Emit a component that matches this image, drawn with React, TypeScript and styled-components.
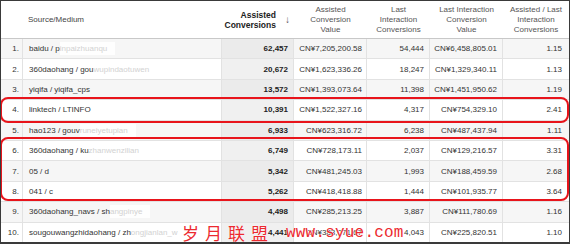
import React from "react";
import styled, { createGlobalStyle } from "styled-components";

const Global = createGlobalStyle`
  html, body { margin: 0; padding: 0; background: #fff; }
  body { font-family: "Liberation Sans", Arial, sans-serif; }
`;

const COLS = "22px 199px 72px 73px 63px 73px 1fr";

const Frame = styled.div`
  position: relative;
  width: 570px;
  height: 244px;
  box-sizing: border-box;
  border: 1px solid #3a3a3a;
  border-bottom-width: 2px;
  overflow: hidden;
  background: #fff;
  font-size: 8px;
  color: #333;
`;

const HeaderRow = styled.div`
  display: grid;
  grid-template-columns: ${COLS};
  height: 37px;
  border-bottom: 1px solid #c8c8c8;
  background: #fff;
`;

const HeadCell = styled.div<{ $align?: "left" | "center" | "right"; $bold?: boolean }>`
  display: flex;
  align-items: center;
  justify-content: ${(p) =>
    p.$align === "left" ? "flex-start" : p.$align === "right" ? "flex-end" : "center"};
  text-align: ${(p) => p.$align || "center"};
  line-height: 10px;
  color: ${(p) => (p.$bold ? "#222" : "#555")};
  font-weight: ${(p) => (p.$bold ? 700 : 400)};
  font-size: ${(p) => (p.$bold ? "8.5px" : "8px")};
  padding: 0 3px;
  box-sizing: border-box;
`;

const SourceHead = styled(HeadCell)`
  grid-column: 1 / 3;
  padding-left: 27px;
  color: #444;
`;

const SortArrow = styled.span`
  font-weight: 400;
  color: #555;
  font-size: 10px;
  margin-left: 9px;
  margin-right: 1px;
`;

const Row = styled.div<{ $odd: boolean }>`
  display: grid;
  grid-template-columns: ${COLS};
  height: 20.4px;
  box-sizing: border-box;
  border-bottom: 1px solid #e2e2e2;
  background: ${(p) => (p.$odd ? "#f6f6f6" : "#fff")};
`;

const Cell = styled.div<{ $align?: "left" | "right"; $pad?: number; $sorted?: boolean; $odd?: boolean }>`
  display: flex;
  align-items: center;
  justify-content: ${(p) => (p.$align === "left" ? "flex-start" : "flex-end")};
  padding: ${(p) => (p.$align === "left" ? `0 0 0 ${p.$pad ?? 5}px` : `0 ${p.$pad ?? 5}px 0 0`)};
  border-right: 1px solid #e2e2e2;
  white-space: nowrap;
  overflow: hidden;
  background: ${(p) => (p.$sorted ? (p.$odd ? "#ebebeb" : "#f0f0f0") : "transparent")};
  font-weight: ${(p) => (p.$sorted ? 700 : 400)};
  color: ${(p) => (p.$sorted ? "#222" : "#333")};
  &:last-child { border-right: none; }
`;

const Redacted = styled.span`
  color: #d2d2d2;
  background: rgba(255, 255, 255, 0.85);
  padding: 2px 8px 2px 0;
`;

const Highlight = styled.div<{ $top: number; $height: number }>`
  position: absolute;
  left: -1px;
  right: 0;
  top: ${(p) => p.$top}px;
  height: ${(p) => p.$height}px;
  border: 2px solid #e8141b;
  border-radius: 8px;
  box-sizing: border-box;
  pointer-events: none;
`;

const Watermark = styled.div`
  position: absolute;
  left: 181px;
  top: 222px;
  display: flex;
  align-items: center;
  color: #ec2a30;
  text-shadow: 0 0 1px #fff, 0 0 1px #fff;
  pointer-events: none;
`;

const WmChar = styled.span`
  font-family: "Noto Sans CJK SC", sans-serif;
  font-size: 17px;
  width: 23px;
  line-height: 20px;
`;

const WmUrl = styled.span`
  font-family: "Liberation Mono", monospace;
  font-size: 16px;
  line-height: 20px;
  margin-left: 12px;
  letter-spacing: 0.2px;
`;

type Item = {
  src: string;
  hidden?: string;
  ac: string;
  acv: string;
  lic: string;
  licv: string;
  ratio: string;
};

const data: Item[] = [
  { src: "baidu / p", hidden: "inpaizhuanqu", ac: "62,457", acv: "CN¥7,205,200.58", lic: "54,444", licv: "CN¥6,458,805.01", ratio: "1.15" },
  { src: "360daohang / gou", hidden: "wupindaotuwen", ac: "20,672", acv: "CN¥1,623,336.26", lic: "18,247", licv: "CN¥1,329,340.11", ratio: "1.13" },
  { src: "yiqifa / yiqifa_cps", ac: "13,572", acv: "CN¥1,393,073.64", lic: "11,398", licv: "CN¥1,451,950.62", ratio: "1.19" },
  { src: "linktech / LTINFO", ac: "10,391", acv: "CN¥1,522,327.16", lic: "4,317", licv: "CN¥754,329.10", ratio: "2.41" },
  { src: "hao123 / gouv", hidden: "runeiyetupian", ac: "6,933", acv: "CN¥623,316.72", lic: "6,238", licv: "CN¥487,437.94", ratio: "1.11" },
  { src: "360daohang / ku", hidden: "zhanwenzilian", ac: "6,749", acv: "CN¥728,173.11", lic: "2,037", licv: "CN¥129,216.57", ratio: "3.31" },
  { src: "05 / d", ac: "5,342", acv: "CN¥481,245.03", lic: "1,993", licv: "CN¥188,459.59", ratio: "2.68" },
  { src: "041 / c", ac: "5,262", acv: "CN¥418,418.88", lic: "1,444", licv: "CN¥101,935.77", ratio: "3.64" },
  { src: "360daohang_navs / sh", hidden: "angpinye", ac: "4,498", acv: "CN¥285,213.25", lic: "3,887", licv: "CN¥111,780.69", ratio: "1.16" },
  { src: "sougouwangzhidaohang / zh", hidden: "ongjianlan_w", ac: "4,441", acv: "CN¥383,071.67", lic: "4,043", licv: "CN¥225,820.51", ratio: "1.10" },
];

export default function App() {
  return (
    <>
      <Global />
      <Frame>
        <HeaderRow>
          <SourceHead $align="left">Source/Medium</SourceHead>
          <HeadCell $align="right" $bold>
            <span>
              Assisted
              <br />
              Conversions
            </span>
            <SortArrow>↓</SortArrow>
          </HeadCell>
          <HeadCell>
            Assisted
            <br />
            Conversion
            <br />
            Value
          </HeadCell>
          <HeadCell>
            Last
            <br />
            Interaction
            <br />
            Conversions
          </HeadCell>
          <HeadCell>
            Last Interaction
            <br />
            Conversion
            <br />
            Value
          </HeadCell>
          <HeadCell>
            Assisted / Last
            <br />
            Interaction
            <br />
            Conversions
          </HeadCell>
        </HeaderRow>
        {data.map((d, i) => {
          const odd = i % 2 === 0;
          return (
            <Row key={i} $odd={odd}>
              <Cell $pad={3}>{i + 1}.</Cell>
              <Cell $align="left" $pad={6}>
                {d.src}
                {d.hidden && <Redacted>{d.hidden}</Redacted>}
              </Cell>
              <Cell $sorted $odd={odd}>{d.ac}</Cell>
              <Cell $pad={4}>{d.acv}</Cell>
              <Cell>{d.lic}</Cell>
              <Cell>{d.licv}</Cell>
              <Cell $pad={7}>{d.ratio}</Cell>
            </Row>
          );
        })}
        <Highlight $top={96} $height={26} />
        <Highlight $top={136} $height={64} />
        <Watermark>
          <WmChar>岁</WmChar>
          <WmChar>月</WmChar>
          <WmChar>联</WmChar>
          <WmChar>盟</WmChar>
          <WmUrl>www.syue.com</WmUrl>
        </Watermark>
      </Frame>
    </>
  );
}
